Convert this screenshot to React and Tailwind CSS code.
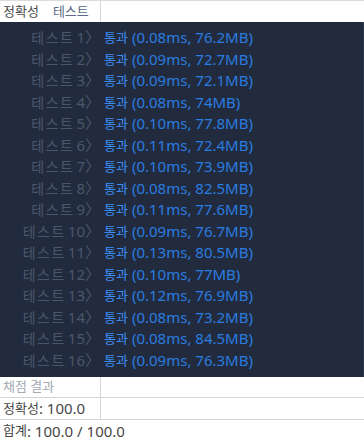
import React from 'react';

const results = [
  ['0.08ms', '76.2MB'],
  ['0.09ms', '72.7MB'],
  ['0.09ms', '72.1MB'],
  ['0.08ms', '74MB'],
  ['0.10ms', '77.8MB'],
  ['0.11ms', '72.4MB'],
  ['0.10ms', '73.9MB'],
  ['0.08ms', '82.5MB'],
  ['0.11ms', '77.6MB'],
  ['0.09ms', '76.7MB'],
  ['0.13ms', '80.5MB'],
  ['0.10ms', '77MB'],
  ['0.12ms', '76.9MB'],
  ['0.08ms', '73.2MB'],
  ['0.08ms', '84.5MB'],
  ['0.09ms', '76.3MB'],
];

// hangul runs are set a bit smaller than the latin text, like the original font
const K = ({ children, className = '' }) => (
  <span className={`text-[13px] ${className}`}>{children}</span>
);

export default function App() {
  return (
    <div className="w-[364px] h-[443px] bg-white overflow-hidden font-['Noto_Sans','Noto_Sans_CJK_KR',sans-serif] text-[15px]">
      {/* Header */}
      <div className="flex h-[22px] border-t border-[#dcdcdc]">
        <div className="w-[101px] border-r border-[#d4d4d4] flex items-center pl-[3px] leading-none">
          <K className="text-[#4a4a4a] text-[12.5px]">정확성</K>
          <K className="ml-[14px] text-[#5b6a85] text-[12.5px]">테스트</K>
        </div>
        <div className="flex-1" />
      </div>

      {/* Results console */}
      <div className="h-[355px] bg-[#222b3d] border-r border-[#2f3a4f] pt-[5px]">
        {results.map(([time, mem], i) => (
          <div key={i} className="flex h-[21.5px] items-center whitespace-nowrap leading-none">
            <div className="w-[85px] flex justify-end items-baseline text-[#4a566b]">
              <span className="text-[14px] tracking-[1.5px]">테스트</span>
              <span className="ml-[2px]">{i + 1}</span>
            </div>
            <span className="w-[15px] text-center text-[#4a566b] text-[15px]">〉</span>
            <K className="ml-[4px] text-[#3b8ef5]">통과</K>
            <span className="ml-[4px] text-[#2a7ce0]">({time}, {mem})</span>
          </div>
        ))}
      </div>

      {/* Summary */}
      <div className="flex h-[21px] border-b border-[#d4d4d4]">
        <div className="w-[101px] border-r border-[#d4d4d4] flex items-center pl-[3px] text-[#a3a9b2]">
          <K>채점 결과</K>
        </div>
        <div className="flex-1" />
      </div>
      <div className="flex h-[22px] border-b border-[#d4d4d4]">
        <div className="w-[101px] border-r border-[#d4d4d4] flex items-center pl-[3px] text-[#474747] whitespace-nowrap">
          <K>정확성</K>: 100.0
        </div>
        <div className="flex-1" />
      </div>
      <div className="flex h-[22px] items-center pl-[3px] text-[#474747]">
        <K>합계</K>: 100.0 / 100.0
      </div>
    </div>
  );
}
